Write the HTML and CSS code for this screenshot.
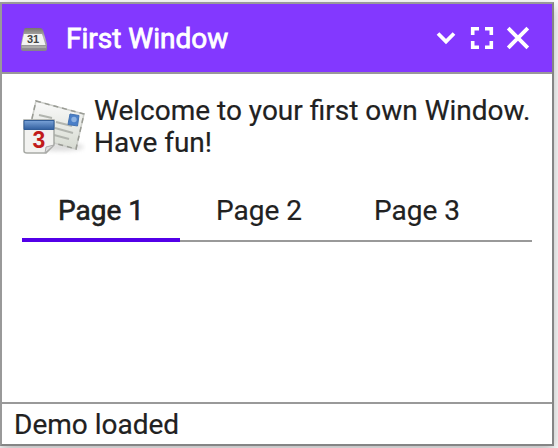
FILE: index.html
```
<!DOCTYPE html>
<html lang="en">
<head>
<meta charset="utf-8">
<title>First Window</title>
<link rel="stylesheet" href="styles.css">
</head>
<body>
<section class="window">
  <header class="titlebar">
    <svg class="app-icon" width="28" height="26" viewBox="0 0 28 26">
      <defs>
        <linearGradient id="metal" x1="0" y1="0" x2="0" y2="1"><stop offset="0" stop-color="#77736f"/><stop offset=".4" stop-color="#b8b8b6"/><stop offset="1" stop-color="#85828a"/></linearGradient>
      </defs>
      <path d="M4 3Q4 1 6 1H20Q22 1 23 3L27 17V22Q27 24 25 24H3Q1 24 1 22V17Z" fill="url(#metal)"/>
      <path d="M4 7H22L25.500 18H1.500Z" fill="#f2f3f2"/>
      <path d="M2 20H26" stroke="#aaaaa8" stroke-width="2"/>
      <text x="7" y="16" class="app-date">31</text>
    </svg>
    <h1 class="title">First Window</h1>
    <div class="controls">
      <svg width="20" height="24" viewBox="0 0 20 24"><path d="M2 7.500L10 15.500L18 7.500" fill="none" stroke="#fff" stroke-width="3.800"/></svg>
      <svg width="24" height="24" viewBox="0 0 24 24"><path d="M2.700 9V2.700H9M15 2.700H21.300V9M21.300 15V21.300H15M9 21.300H2.700V15" fill="none" stroke="#fff" stroke-width="3.600"/></svg>
      <svg width="24" height="24" viewBox="0 0 24 24"><path d="M2.200 2.200L21.800 21.800M21.800 2.200L2.200 21.800" fill="none" stroke="#fff" stroke-width="3.800"/></svg>
    </div>
  </header>
  <main class="content">
    <div class="intro">
      <svg class="mail-icon" width="64" height="64" viewBox="0 0 64 64">
        <defs>
          <linearGradient id="paper" x1="0" y1="0" x2="0" y2="1"><stop offset="0" stop-color="#fafafa"/><stop offset="1" stop-color="#d7dbd2"/></linearGradient>
          <linearGradient id="blue" x1="0" y1="0" x2="0" y2="1"><stop offset="0" stop-color="#7aa3d8"/><stop offset="1" stop-color="#315f9f"/></linearGradient>
          <filter id="soft" x="-20%" y="-50%" width="140%" height="200%"><feGaussianBlur stdDeviation="2"/></filter>
        </defs>
        <ellipse cx="38" cy="52" rx="24" ry="4" fill="#aaa" opacity=".4" filter="url(#soft)"/>
        <path d="M14 6L62 19L54 54L6 41Z" fill="url(#paper)" stroke="#cdcfca" stroke-width="1.500"/>
        <path d="M14 6L62 19L54 54L6 41Z" fill="none" stroke="#999b94" stroke-width="1.500" stroke-dasharray="5 4"/>
        <path d="M17 20L30 23M34 27L50 31M33 33L51 38M32 40L47 44" stroke="#b2b5af" stroke-width="2"/>
        <path d="M48 19L57 20.500L55.500 31L46 29.500Z" fill="#4a7fc8" stroke="#4272b2"/>
        <circle cx="52" cy="24.500" r="2.700" fill="#8bb1e1"/>
        <path d="M2 25H32V50L24 58H5Q2 58 2 56V27Z" fill="#f2f2f0" stroke="#a8aaa5" stroke-width="1.500"/>
        <path d="M2 25.500H32V34.500H2Z" fill="url(#blue)" stroke="#315d98"/>
        <path d="M32 50L23 58L24 52Z" fill="#ddd" stroke="#aaa"/>
        <text x="10.500" y="53" class="mail-date">3</text>
      </svg>
      <p class="message">Welcome to your first own Window.<br>Have fun!</p>
    </div>
    <nav class="tabs">
      <a class="tab active">Page 1</a>
      <a class="tab">Page 2</a>
      <a class="tab">Page 3</a>
    </nav>
  </main>
  <footer class="status">Demo loaded</footer>
</section>
</body>
</html>
```
FILE: styles.css
```
* { box-sizing: border-box; }
body {
  margin: 0;
  padding-top: 2px;
  height: 448px;
  overflow: hidden;
  background: #fff;
  color: #212121;
  font: 28px/32px Roboto, sans-serif;
  -webkit-text-stroke: .2px currentColor;
}
.window {
  display: flex;
  flex-direction: column;
  width: 554px;
  height: 444px;
  border: 2px solid #858585;
  border-top-color: #999;
  border-left-color: #999;
  background: #fff;
  box-shadow: 0 4px 12px rgba(0, 0, 0, .3);
}
.titlebar {
  display: flex;
  align-items: center;
  height: 70px;
  padding: 0 22px 0 18px;
  border-bottom: 2px solid #999;
  background: #8338ff;
  color: #fff;
}
.app-icon { margin-top: 4px; }
.app-date { font: bold 11px "Liberation Sans", sans-serif; fill: #444; stroke: none; }
.title {
  margin: 2px 0 0 18px;
  font-size: 28px;
  font-weight: 400;
  -webkit-text-stroke: .8px currentColor;
}
.controls { display: flex; gap: 14px; margin-left: auto; }
.controls svg:last-child { margin-left: -2px; }
.content { flex: 1; padding: 21px 20px 20px; }
.intro { display: flex; gap: 8px; height: 68px; }
.message { margin: 0; white-space: nowrap; }
.mail-date { font: bold 23px "Liberation Sans", sans-serif; fill: #c11b1b; }
.tabs { display: flex; margin-top: 11px; box-shadow: inset 0 -2px #999; height: 68px; }
.tab { width: 158px; padding-top: 21px; text-align: center; }
.active { border-bottom: 4px solid #5300e8; -webkit-text-stroke: .6px currentColor; }
.status { height: 42px; padding: 5px 12px 3px; border-top: 2px solid #999; }
```
